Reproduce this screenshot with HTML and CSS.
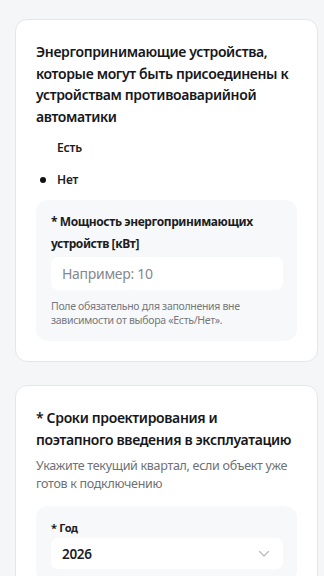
FILE: index.html
```html
<!DOCTYPE html>
<html lang="ru">
<head>
    <meta charset="UTF-8">
    <meta name="viewport" content="width=device-width, initial-scale=1.0">
    <title>Заявка на присоединение</title>
    <link rel="stylesheet" href="styles.css">
</head>
<body>
    <div class="form-card">
        <h2 class="card-title">Энергопринимающие устройства, которые могут быть присоединены к устройствам противоаварийной автоматики</h2>

        <ul class="choice-list">
            <li class="choice">Есть</li>
            <li class="choice selected">Нет</li>
        </ul>

        <div class="field-box">
            <label class="field-label" for="power">* Мощность энергопринимающих устройств [кВт]</label>
            <input type="text" id="power" class="field-input" placeholder="Например: 10">
            <p class="field-hint">Поле обязательно для заполнения вне зависимости от выбора «Есть/Нет».</p>
        </div>
    </div>

    <div class="form-card">
        <h2 class="card-title">* Сроки проектирования и поэтапного введения в эксплуатацию</h2>
        <p class="card-desc">Укажите текущий квартал, если объект уже готов к подключению</p>

        <div class="field-box">
            <label class="field-label small" for="year">* Год</label>
            <div class="select-wrap">
                <select id="year" class="field-select">
                    <option>2026</option>
                    <option>2027</option>
                    <option>2028</option>
                </select>
                <svg class="chevron" width="12" height="8" viewBox="0 0 12 8" fill="none">
                    <path d="M1.5 1.5 L6 6 L10.5 1.5" stroke="#b5b8bd" stroke-width="1.2" stroke-linecap="round" stroke-linejoin="round"/>
                </svg>
            </div>
        </div>
    </div>
</body>
</html>
```

FILE: styles.css
```css
* {
    box-sizing: border-box;
    margin: 0;
    padding: 0;
}
body {
    font-family: 'Noto Sans', 'Open Sans', sans-serif;
    background-color: #f5f6f8;
    color: #1c1d1f;
    padding: 19px 6px 0 15px;
}
.form-card {
    background: #fff;
    border: 1px solid #e4e6ea;
    border-radius: 12px;
    padding: 21px 20px 20px;
    margin-bottom: 23px;
}
.card-title {
    font-size: 14px;
    font-weight: 600;
    line-height: 21.7px;
    letter-spacing: -0.35px;
    color: #16171a;
}
.choice-list {
    list-style: none;
    margin: 11px 0 11px;
}
.choice {
    position: relative;
    font-size: 12px;
    font-weight: 600;
    line-height: 18px;
    letter-spacing: -0.2px;
    padding-left: 21px;
    margin-bottom: 14px;
}
.choice:last-child {
    margin-bottom: 0;
}
.choice.selected::before {
    content: '';
    position: absolute;
    left: 4px;
    top: 6px;
    width: 6px;
    height: 6px;
    border-radius: 50%;
    background: #111;
}
.field-box {
    background: #f7f8fa;
    border-radius: 12px;
    padding: 11px 14px 13px 15px;
}
.field-label {
    display: block;
    font-size: 12px;
    font-weight: 700;
    line-height: 22.5px;
    letter-spacing: -0.4px;
    margin-bottom: 1px;
}
.field-label.small {
    font-size: 11px;
    line-height: 16px;
    letter-spacing: -0.3px;
    margin: 3px 0 2px;
}
.field-input,
.field-select {
    display: block;
    width: 100%;
    height: 33px;
    border: none;
    border-radius: 7px;
    background: #fff;
    padding: 0 11px;
    font-family: inherit;
    font-size: 14px;
    letter-spacing: -0.3px;
    color: #1c1d1f;
    outline: none;
}
.field-input::placeholder {
    color: #85888d;
}
.field-hint {
    margin-top: 9px;
    font-size: 10.5px;
    line-height: 14.5px;
    letter-spacing: -0.3px;
    color: #75787d;
}
.card-desc {
    margin-top: 7px;
    font-size: 12.5px;
    line-height: 18px;
    letter-spacing: -0.3px;
    color: #6e7176;
    margin-bottom: 13px;
}
.select-wrap {
    position: relative;
}
.field-select {
    appearance: none;
    -webkit-appearance: none;
    font-size: 13.5px;
    font-weight: 600;
    height: 31px;
}
.chevron {
    position: absolute;
    right: 13px;
    top: 12px;
    pointer-events: none;
}
```
